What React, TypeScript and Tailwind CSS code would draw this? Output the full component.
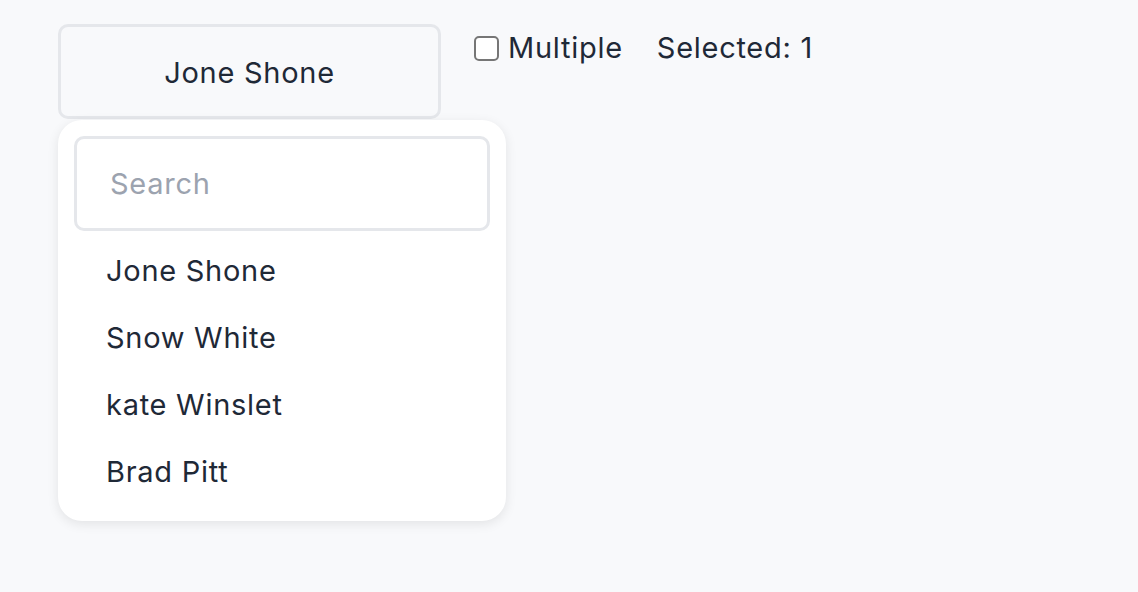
import React from "react";

const items = ["Jone Shone", "Snow White", "kate Winslet", "Brad Pitt"];

export default function App() {
  return (
    <div className="min-h-screen w-full bg-[#f8f9fb] px-[58px] pt-[24px] text-[#1f2937] font-['Inter',sans-serif] text-[29px] tracking-[0.025em]">
      <div className="flex items-start">
        <div className="relative w-[383px]">
          <button className="flex h-[95px] w-full items-center justify-center rounded-[10px] border-[3px] border-[#e5e7eb] bg-[#f8f9fb] pt-[2px] text-[29px] tracking-[0.025em] text-[#1f2937]">
            Jone Shone
          </button>
          <div className="absolute left-0 top-[96px] w-[448px] rounded-[24px] bg-white p-4 shadow-[0_3px_12px_rgba(0,0,0,0.09)]">
            <div className="flex h-[95px] items-center rounded-[10px] border-[3px] border-[#e5e7eb] bg-white pl-[33px] text-[#9ca3af]">
              Search
            </div>
            <div className="mt-[6px] flex flex-col">
              {items.map((n) => (
                <div key={n} className="flex h-[67px] items-center pl-[32px]">
                  {n}
                </div>
              ))}
            </div>
          </div>
        </div>
        <div className="ml-[33px] flex h-[48px] items-center">
          <span className="h-[25px] w-[25px] rounded-[5px] border-2 border-[#767676] bg-white" />
          <span className="ml-[9px]">Multiple</span>
          <span className="ml-[34px]">Selected: 1</span>
        </div>
      </div>
    </div>
  );
}
